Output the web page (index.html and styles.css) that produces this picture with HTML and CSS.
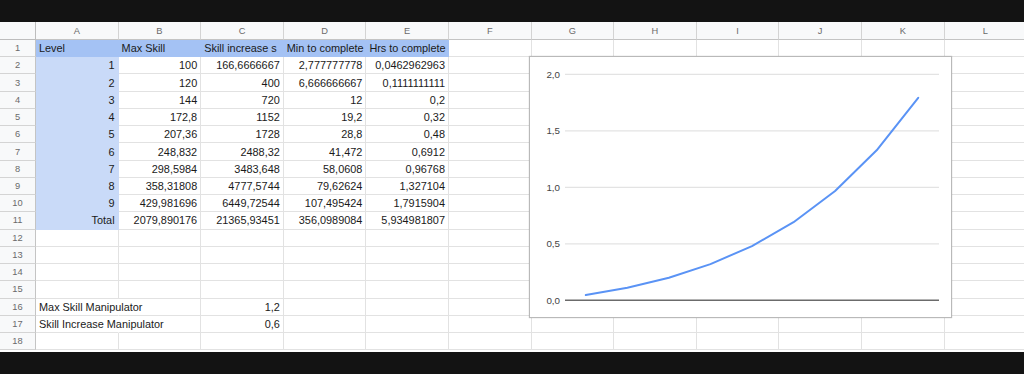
FILE: index.html
```html
<!DOCTYPE html>
<html>
<head>
  <title>Skill sheet</title>
  <link rel="stylesheet" href="styles.css">
</head>
<body>
  <div class="screen">
    <div class="sheet">
      <div class="corner"></div>
      <div class="ch">A</div><div class="ch">B</div><div class="ch">C</div><div class="ch">D</div><div class="ch">E</div><div class="ch">F</div>
      <div class="ch">G</div><div class="ch">H</div><div class="ch">I</div><div class="ch">J</div><div class="ch">K</div><div class="ch">L</div>

      <div class="rh">1</div>
      <div class="c hd">Level</div><div class="c hd">Max Skill</div><div class="c hd">Skill increase s</div><div class="c hd">Min to complete</div><div class="c hd">Hrs to complete</div>
      <div class="c"></div><div class="c"></div><div class="c"></div><div class="c"></div><div class="c"></div><div class="c"></div><div class="c"></div>

      <div class="rh">2</div>
      <div class="c n lv">1</div><div class="c n">100</div><div class="c n">166,6666667</div><div class="c n">2,777777778</div><div class="c n">0,0462962963</div>
      <div class="c"></div><div class="c"></div><div class="c"></div><div class="c"></div><div class="c"></div><div class="c"></div><div class="c"></div>

      <div class="rh">3</div>
      <div class="c n lv">2</div><div class="c n">120</div><div class="c n">400</div><div class="c n">6,666666667</div><div class="c n">0,1111111111</div>
      <div class="c"></div><div class="c"></div><div class="c"></div><div class="c"></div><div class="c"></div><div class="c"></div><div class="c"></div>

      <div class="rh">4</div>
      <div class="c n lv">3</div><div class="c n">144</div><div class="c n">720</div><div class="c n">12</div><div class="c n">0,2</div>
      <div class="c"></div><div class="c"></div><div class="c"></div><div class="c"></div><div class="c"></div><div class="c"></div><div class="c"></div>

      <div class="rh">5</div>
      <div class="c n lv">4</div><div class="c n">172,8</div><div class="c n">1152</div><div class="c n">19,2</div><div class="c n">0,32</div>
      <div class="c"></div><div class="c"></div><div class="c"></div><div class="c"></div><div class="c"></div><div class="c"></div><div class="c"></div>

      <div class="rh">6</div>
      <div class="c n lv">5</div><div class="c n">207,36</div><div class="c n">1728</div><div class="c n">28,8</div><div class="c n">0,48</div>
      <div class="c"></div><div class="c"></div><div class="c"></div><div class="c"></div><div class="c"></div><div class="c"></div><div class="c"></div>

      <div class="rh">7</div>
      <div class="c n lv">6</div><div class="c n">248,832</div><div class="c n">2488,32</div><div class="c n">41,472</div><div class="c n">0,6912</div>
      <div class="c"></div><div class="c"></div><div class="c"></div><div class="c"></div><div class="c"></div><div class="c"></div><div class="c"></div>

      <div class="rh">8</div>
      <div class="c n lv">7</div><div class="c n">298,5984</div><div class="c n">3483,648</div><div class="c n">58,0608</div><div class="c n">0,96768</div>
      <div class="c"></div><div class="c"></div><div class="c"></div><div class="c"></div><div class="c"></div><div class="c"></div><div class="c"></div>

      <div class="rh">9</div>
      <div class="c n lv">8</div><div class="c n">358,31808</div><div class="c n">4777,5744</div><div class="c n">79,62624</div><div class="c n">1,327104</div>
      <div class="c"></div><div class="c"></div><div class="c"></div><div class="c"></div><div class="c"></div><div class="c"></div><div class="c"></div>

      <div class="rh">10</div>
      <div class="c n lv">9</div><div class="c n">429,981696</div><div class="c n">6449,72544</div><div class="c n">107,495424</div><div class="c n">1,7915904</div>
      <div class="c"></div><div class="c"></div><div class="c"></div><div class="c"></div><div class="c"></div><div class="c"></div><div class="c"></div>

      <div class="rh">11</div>
      <div class="c n lv">Total</div><div class="c n">2079,890176</div><div class="c n">21365,93451</div><div class="c n">356,0989084</div><div class="c n">5,934981807</div>
      <div class="c"></div><div class="c"></div><div class="c"></div><div class="c"></div><div class="c"></div><div class="c"></div><div class="c"></div>

      <div class="rh">12</div>
      <div class="c"></div><div class="c"></div><div class="c"></div><div class="c"></div><div class="c"></div><div class="c"></div>
      <div class="c"></div><div class="c"></div><div class="c"></div><div class="c"></div><div class="c"></div><div class="c"></div>

      <div class="rh">13</div>
      <div class="c"></div><div class="c"></div><div class="c"></div><div class="c"></div><div class="c"></div><div class="c"></div>
      <div class="c"></div><div class="c"></div><div class="c"></div><div class="c"></div><div class="c"></div><div class="c"></div>

      <div class="rh">14</div>
      <div class="c"></div><div class="c"></div><div class="c"></div><div class="c"></div><div class="c"></div><div class="c"></div>
      <div class="c"></div><div class="c"></div><div class="c"></div><div class="c"></div><div class="c"></div><div class="c"></div>

      <div class="rh">15</div>
      <div class="c"></div><div class="c"></div><div class="c"></div><div class="c"></div><div class="c"></div><div class="c"></div>
      <div class="c"></div><div class="c"></div><div class="c"></div><div class="c"></div><div class="c"></div><div class="c"></div>

      <div class="rh">16</div>
      <div class="c spill">Max Skill Manipulator</div><div class="c"></div><div class="c n">1,2</div><div class="c"></div><div class="c"></div><div class="c"></div>
      <div class="c"></div><div class="c"></div><div class="c"></div><div class="c"></div><div class="c"></div><div class="c"></div>

      <div class="rh">17</div>
      <div class="c spill">Skill Increase Manipulator</div><div class="c"></div><div class="c n">0,6</div><div class="c"></div><div class="c"></div><div class="c"></div>
      <div class="c"></div><div class="c"></div><div class="c"></div><div class="c"></div><div class="c"></div><div class="c"></div>

      <div class="rh">18</div>
      <div class="c"></div><div class="c"></div><div class="c"></div><div class="c"></div><div class="c"></div><div class="c"></div>
      <div class="c"></div><div class="c"></div><div class="c"></div><div class="c"></div><div class="c"></div><div class="c"></div>
    </div>

    <!-- chart floats over the grid, like in the sheet -->
    <div class="chart">
      <svg width="421" height="260" viewBox="0 0 421 260">
        <g class="grid">
          <line x1="35" y1="17.3" x2="409" y2="17.3"/>
          <line x1="35" y1="73.8" x2="409" y2="73.8"/>
          <line x1="35" y1="130.3" x2="409" y2="130.3"/>
          <line x1="35" y1="186.8" x2="409" y2="186.8"/>
        </g>
        <line class="axis" x1="35" y1="243.3" x2="409" y2="243.3"/>
        <g class="ylabels">
          <text x="30" y="20.9">2,0</text>
          <text x="30" y="77.4">1,5</text>
          <text x="30" y="133.9">1,0</text>
          <text x="30" y="190.4">0,5</text>
          <text x="30" y="246.9">0,0</text>
        </g>
        <polyline class="series" points="55.8,238.07 97.35,230.74 138.9,220.7 180.45,207.14 222,189.06 263.55,165.19 305.1,133.95 346.65,93.34 388.2,40.85"/>
      </svg>
    </div>
  </div>
</body>
</html>
```

FILE: styles.css
```css
body {
  margin: 0;
  background: #131313;
  font-family: "Liberation Sans", Arial, sans-serif;
}

.screen {
  position: relative;
  margin-top: 22px;
  height: 330px;
  overflow: hidden;
  background: #fff;
}

.sheet {
  display: grid;
  grid-template-columns: 36px repeat(12, 82.6px);
  grid-template-rows: 18px;
  grid-auto-rows: 17.24px;
  width: max-content;
}

.corner,
.ch,
.rh {
  background: #f8f9fa;
  color: #6a6a6a;
  font-size: 9.3px;
  display: flex;
  align-items: center;
  justify-content: center;
  box-sizing: border-box;
}

.corner {
  border-right: 1px solid #bdbdbd;
  border-bottom: 1px solid #bdbdbd;
}

.ch {
  border-right: 1px solid #d4d4d4;
  border-bottom: 1px solid #c4c4c4;
}

.rh {
  border-right: 1px solid #c4c4c4;
  border-bottom: 1px solid #d4d4d4;
}

.c {
  box-sizing: border-box;
  display: flex;
  align-items: center;
  padding: 0 3px;
  border-right: 1px solid #e2e2e2;
  border-bottom: 1px solid #e2e2e2;
  font-size: 10.9px;
  color: #1a1a1a;
  white-space: nowrap;
  overflow: hidden;
}

.n {
  justify-content: flex-end;
}

.hd {
  background: #a4c2f4;
  border-color: #a4c2f4;
}

.lv {
  background: #c9daf8;
  border-color: #c9daf8;
}

.spill {
  overflow: visible;
  border-right-color: transparent;
  position: relative;
  z-index: 1;
}

.chart {
  position: absolute;
  left: 529px;
  top: 34px;
  width: 423px;
  height: 262px;
  box-sizing: border-box;
  border: 1px solid #b9b9b9;
  background: #fff;
  box-shadow: 0 0 1px rgba(0, 0, 0, 0.25);
}

.chart svg {
  display: block;
}

.grid line {
  stroke: #e3e3e3;
  stroke-width: 1.2;
}

.axis {
  stroke: #6b6b6b;
  stroke-width: 1.5;
}

.ylabels text {
  font-family: "Liberation Sans", Arial, sans-serif;
  font-size: 9.8px;
  fill: #444;
  text-anchor: end;
}

.series {
  fill: none;
  stroke: #5a93f5;
  stroke-width: 2;
  stroke-linejoin: round;
  stroke-linecap: round;
}
```
